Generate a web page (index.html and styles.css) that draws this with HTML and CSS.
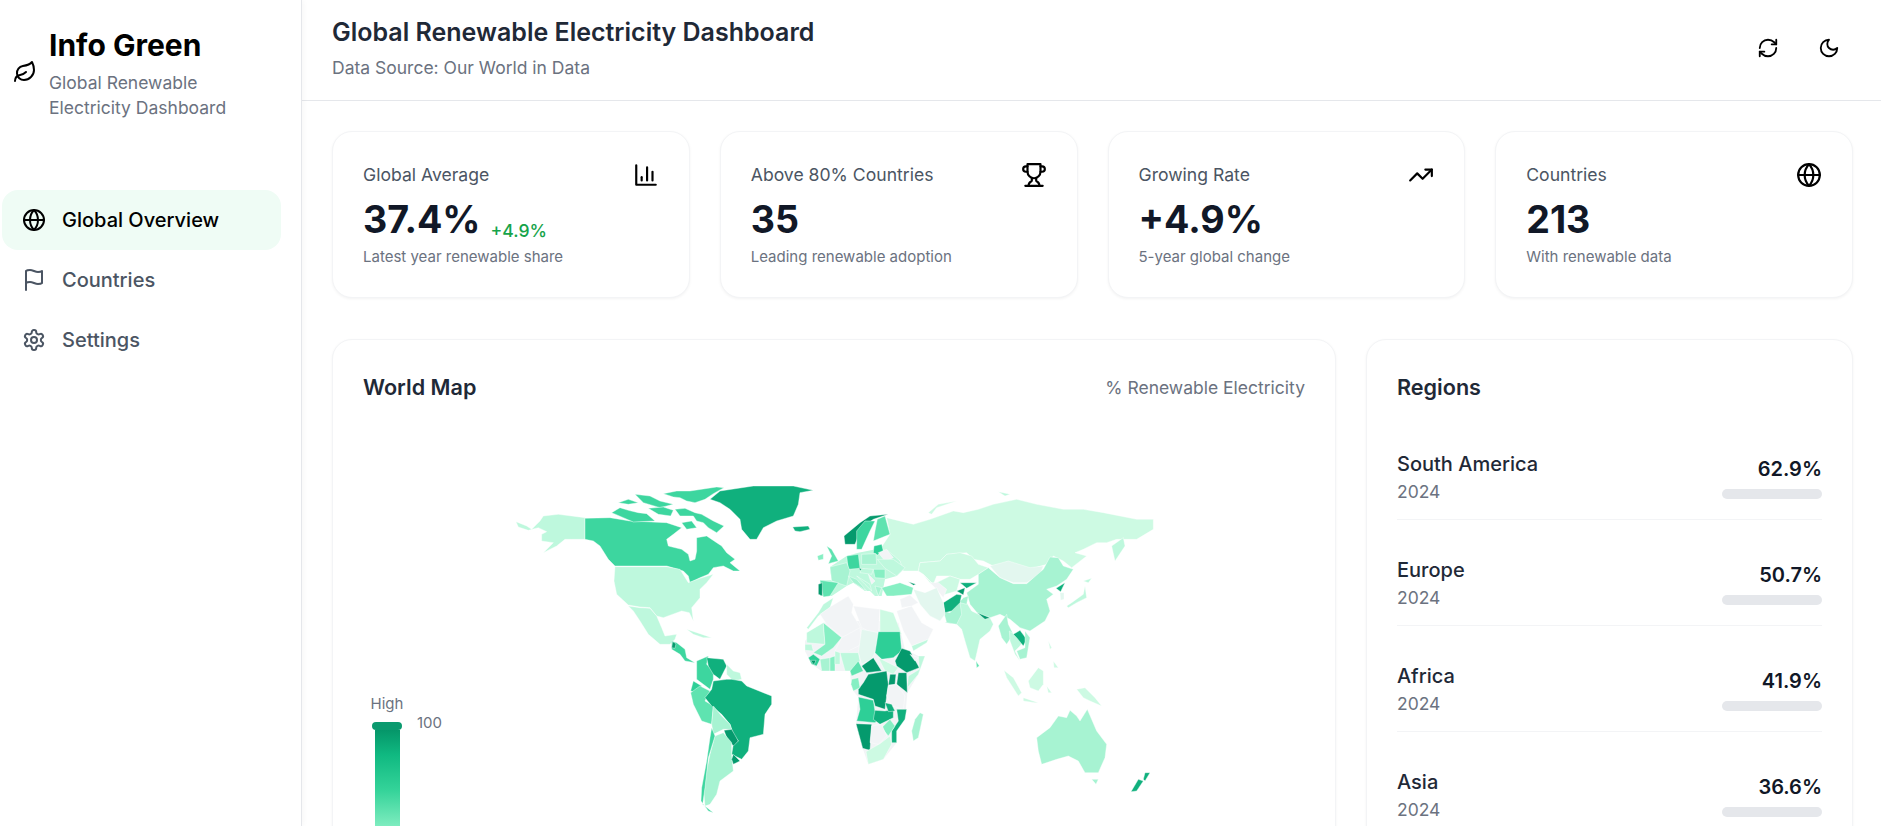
FILE: index.html
```html
<!DOCTYPE html>
<html lang="en">
<head>
<meta charset="utf-8">
<title>Info Green</title>
<link rel="stylesheet" href="styles.css">
</head>
<body>
<div class="app">
  <aside class="sidebar">
    <div class="brand">
      <svg class="icon brand-icon" viewBox="0 0 24 24"><path d="M11 20A7 7 0 0 1 9.8 6.1C15.5 5 17 4.48 19 2c1 2 2 4.18 2 8 0 5.5-4.78 10-10 10Z"/><path d="M2 21c0-3 1.85-5.36 5.08-6C9.5 14.52 12 13 13 12"/></svg>
      <div>
        <div class="brand-title">Info Green</div>
        <div class="brand-sub">Global Renewable Electricity Dashboard</div>
      </div>
    </div>
    <nav class="nav">
      <a class="nav-item active"><svg class="icon" viewBox="0 0 24 24"><circle cx="12" cy="12" r="10"/><path d="M12 2a14.5 14.5 0 0 0 0 20 14.5 14.5 0 0 0 0-20"/><path d="M2 12h20"/></svg>Global Overview</a>
      <a class="nav-item"><svg class="icon" viewBox="0 0 24 24"><path d="M4 15s1-1 4-1 5 2 8 2 4-1 4-1V3s-1 1-4 1-5-2-8-2-4 1-4 1z"/><path d="M4 22v-7"/></svg>Countries</a>
      <a class="nav-item"><svg class="icon" viewBox="0 0 24 24"><path d="M12.22 2h-.44a2 2 0 0 0-2 2v.18a2 2 0 0 1-1 1.73l-.43.25a2 2 0 0 1-2 0l-.15-.08a2 2 0 0 0-2.73.73l-.22.38a2 2 0 0 0 .73 2.73l.15.1a2 2 0 0 1 1 1.72v.51a2 2 0 0 1-1 1.74l-.15.09a2 2 0 0 0-.73 2.73l.22.38a2 2 0 0 0 2.73.73l.15-.08a2 2 0 0 1 2 0l.43.25a2 2 0 0 1 1 1.73V20a2 2 0 0 0 2 2h.44a2 2 0 0 0 2-2v-.18a2 2 0 0 1 1-1.73l.43-.25a2 2 0 0 1 2 0l.15.08a2 2 0 0 0 2.73-.73l.22-.39a2 2 0 0 0-.73-2.73l-.15-.08a2 2 0 0 1-1-1.74v-.5a2 2 0 0 1 1-1.74l.15-.09a2 2 0 0 0 .73-2.73l-.22-.38a2 2 0 0 0-2.73-.73l-.15.08a2 2 0 0 1-2 0l-.43-.25a2 2 0 0 1-1-1.73V4a2 2 0 0 0-2-2z"/><circle cx="12" cy="12" r="3"/></svg>Settings</a>
    </nav>
  </aside>
  <div class="main">
    <header class="topbar">
      <div>
        <h1 class="page-title">Global Renewable Electricity Dashboard</h1>
        <p class="page-sub">Data Source: Our World in Data</p>
      </div>
      <div class="top-actions">
        <svg class="icon" viewBox="0 0 24 24"><path d="M3 12a9 9 0 0 1 9-9 9.75 9.75 0 0 1 6.74 2.74L21 8"/><path d="M21 3v5h-5"/><path d="M21 12a9 9 0 0 1-9 9 9.75 9.75 0 0 1-6.74-2.74L3 16"/><path d="M8 16H3v5"/></svg>
        <svg class="icon" viewBox="0 0 24 24"><path d="M12 3a6 6 0 0 0 9 9 9 9 0 1 1-9-9Z"/></svg>
      </div>
    </header>
    <div class="content">
      <section class="stats">
        <div class="card stat">
          <div class="stat-head"><span>Global Average</span><svg class="icon" viewBox="0 0 24 24"><path d="M3 3v18h18"/><path d="M18 17V9"/><path d="M13 17V5"/><path d="M8 17v-3"/></svg></div>
          <div class="stat-value">37.4%<span class="stat-delta">+4.9%</span></div>
          <div class="stat-note">Latest year renewable share</div>
        </div>
        <div class="card stat">
          <div class="stat-head"><span>Above 80% Countries</span><svg class="icon" viewBox="0 0 24 24"><path d="M6 9H4.5a2.5 2.5 0 0 1 0-5H6"/><path d="M18 9h1.5a2.5 2.5 0 0 0 0-5H18"/><path d="M4 22h16"/><path d="M10 14.66V17c0 .55-.47.98-.97 1.21C7.85 18.75 7 20.24 7 22"/><path d="M14 14.66V17c0 .55.47.98.97 1.21C16.15 18.75 17 20.24 17 22"/><path d="M18 2H6v7a6 6 0 0 0 12 0V2Z"/></svg></div>
          <div class="stat-value">35</div>
          <div class="stat-note">Leading renewable adoption</div>
        </div>
        <div class="card stat">
          <div class="stat-head"><span>Growing Rate</span><svg class="icon" viewBox="0 0 24 24"><path d="m22 7-8.5 8.5-5-5L2 17"/><path d="M16 7h6v6"/></svg></div>
          <div class="stat-value">+4.9%</div>
          <div class="stat-note">5-year global change</div>
        </div>
        <div class="card stat">
          <div class="stat-head"><span>Countries</span><svg class="icon" viewBox="0 0 24 24"><circle cx="12" cy="12" r="10"/><path d="M12 2a14.5 14.5 0 0 0 0 20 14.5 14.5 0 0 0 0-20"/><path d="M2 12h20"/></svg></div>
          <div class="stat-value">213</div>
          <div class="stat-note">With renewable data</div>
        </div>
      </section>
      <section class="panels">
        <div class="card map-card">
          <div class="panel-head"><h2 class="panel-title">World Map</h2><span class="panel-hint">% Renewable Electricity</span></div>
          <div class="map-area">
            <div class="legend">
              <div class="legend-high">High</div>
              <div class="legend-scale">
                <div class="legend-track"><div class="legend-handle"></div><div class="legend-bar"></div></div>
                <div class="legend-num">100</div>
              </div>
            </div>
            <svg class="world" viewBox="500 470 700 356">
              <g transform="translate(790 480) scale(.33333)">
                <polygon class="m8 base" points="120,258 170,225 205,215 258,205 300,200 345,260 320,285 285,295 275,345 255,345 240,330 225,330 190,305 170,315 125,345 90,345 90,298 125,298"/>
              </g>
              <g transform="translate(790 620) scale(.33333)">
                <polygon class="g base" points="45,60 100,5 155,0 265,0 325,5 345,85 385,105 405,105 385,160 352,215 345,295 320,330 320,365 280,415 235,430 218,382 198,308 205,228 190,210 183,190 180,150 135,150 95,150 65,130 45,90"/>
              </g>
              <g transform="translate(500 470) scale(.33333)">
                <polygon class="m8" points="48,152 80,165 95,175 120,150 130,135 175,130 255,140 255,205 215,205 195,205 170,225 130,245 160,215 125,210 125,190 140,182 115,170 85,178 55,168"/>
                <polygon class="m4" points="255,142 330,140 390,150 500,155 545,170 520,190 500,205 505,225 545,235 565,250 570,270 585,265 590,240 590,200 620,195 650,215 665,225 680,245 705,265 690,275 720,300 700,300 670,285 640,290 625,310 600,320 570,335 565,315 550,300 500,285 345,285 325,265 300,225 280,210 255,205"/>
                <polygon class="m4" points="335,125 360,110 385,118 415,125 440,128 465,150 400,153 370,140"/>
                <polygon class="m4" points="355,95 385,85 415,95 385,100"/>
                <polygon class="m4" points="405,70 450,75 480,90 520,100 480,110 430,95"/>
                <polygon class="m4" points="490,68 530,60 570,60 650,48 672,50 640,68 615,85 585,95 560,90 540,80 520,78"/>
                <polygon class="m4" points="525,115 555,112 585,125 605,130 640,150 672,165 650,185 625,170 610,155 590,150 580,135 540,135"/>
                <polygon class="m4" points="445,112 490,108 520,118 512,135 475,130"/>
                <polygon class="m4" points="545,155 575,150 590,170 560,175"/>
                <polygon class="m2" points="630,85 660,60 760,45 880,45 940,58 900,65 895,100 880,135 830,150 790,170 770,205 750,205 725,175 720,145 690,115 660,95"/>
                <polygon class="m2" points="878,168 925,165 930,175 900,182 885,180"/>
                <polygon class="m8" points="345,287 500,287 540,295 565,335 600,322 640,310 620,335 600,355 600,380 575,410 580,450 568,425 545,420 490,440 470,435 450,410 420,408 385,402 350,370 342,330"/>
                <polygon class="m8" points="385,405 420,410 450,412 470,435 485,470 495,495 530,490 525,505 510,520 480,520 445,490 420,450 400,420"/>
                <polygon class="m4" points="515,510 530,515 555,535 560,560 585,575 555,570 540,550 515,535"/>
                <polygon class="m1" points="518,512 528,518 525,532 515,530"/>
                <polygon class="m8" points="560,475 600,488 635,500 610,500 580,490"/>
                <polygon class="m4" points="590,570 625,555 620,580 640,600 640,625 630,655 610,640 590,625 590,600"/>
                <polygon class="m2" points="620,560 670,565 680,585 660,625 640,610 625,585"/>
                <polygon class="m8" points="680,580 700,600 720,605 725,625 700,630 680,610"/>
                <polygon class="m3" points="580,630 605,645 590,665 572,660"/>
                <polygon class="m5" points="572,665 600,645 630,660 615,690 640,705 635,760 605,750 580,700"/>
                <polygon class="m2" points="615,680 635,655 640,630 680,625 695,625 725,630 740,645 815,675 815,700 795,730 790,790 750,800 745,840 725,865 695,850 700,820 715,810 700,790 690,760 665,730 635,705"/>
                <polygon class="m7" points="640,705 665,735 690,760 695,775 670,775 640,790 635,760"/>
                <polygon class="m1" points="672,778 695,775 715,810 700,825 680,800"/>
                <polygon class="m7" points="645,795 670,785 695,815 695,850 700,900 660,930 650,970 630,1000 615,1005 612,970 620,900 630,850"/>
                <polygon class="m4" points="635,770 645,795 625,860 615,950 608,1000 640,1025 625,1020 603,990 605,950 620,870 630,800"/>
                <polygon class="m1" points="700,850 720,870 700,880 695,865"/>
              </g>
              <g transform="translate(850 470) scale(.33333)">
                <polygon class="m9" points="110,140 170,155 190,160 240,145 310,120 340,125 385,115 430,100 500,85 560,100 640,115 700,115 760,125 860,145 910,145 910,175 860,205 800,205 770,215 740,215 700,235 675,245 710,255 665,290 640,270 610,255 590,280 540,295 500,285 430,285 400,270 370,265 350,245 290,250 270,270 210,275 205,300 160,300 150,270 115,240 90,235 120,190"/>
                <polygon class="m9" points="235,125 265,100 320,90 260,110 245,130"/>
                <polygon class="m8" points="445,62 480,70 465,75"/>
                <polygon class="m9" points="210,275 270,270 290,250 330,245 365,255 385,280 415,290 385,310 360,325 330,325 300,315 260,315 250,340 220,310 205,300"/>
                <polygon class="m9" points="220,312 250,340 300,315 330,325 320,360 280,372 260,350 240,335"/>
                <polygon class="m10" points="420,285 475,270 540,290 580,285 570,310 530,335 490,335 450,320"/>
                <polygon class="m7" points="385,310 415,290 450,320 490,338 530,338 580,295 600,258 625,260 640,285 670,295 650,325 620,345 590,355 610,370 590,385 600,420 585,450 540,480 510,470 480,445 450,430 420,440 385,430 360,400 350,365 385,340"/>
                <polygon class="m2" points="618,352 645,335 632,362"/>
                <polygon class="m10" points="630,365 642,365 642,385 632,388"/>
                <polygon class="m8" points="650,405 665,395 700,370 705,345 710,380 680,395 655,410"/>
                <polygon class="m8" points="700,330 725,322 715,335"/>
                <polygon class="m8" points="785,225 820,200 825,225 795,270"/>
                <polygon class="m8" points="330,395 350,395 365,420 385,430 420,440 430,460 420,480 390,505 375,570 360,560 345,510 335,475 320,460 285,455 310,435"/>
                <polygon class="m7" points="280,420 300,425 340,380 355,375 350,400 330,395 335,430 320,460 290,455"/>
                <polygon class="m2" points="280,395 320,370 335,372 330,395 305,420 285,425"/>
                <polygon class="g" points="240,335 265,335 290,355 280,380 255,350"/>
                <polygon class="m10" points="190,355 225,365 260,350 280,395 285,430 270,450 240,435 210,400"/>
                <polygon class="g" points="140,420 185,405 215,455 250,475 235,505 185,525 160,480"/>
                <polygon class="g" points="150,385 180,372 205,395 185,405 155,410"/>
                <polygon class="m8" points="185,525 235,505 230,515 190,540"/>
                <polygon class="m6" points="95,350 150,335 190,350 185,370 130,375 110,375"/>
                <polygon class="m2" points="330,335 380,335 350,352"/>
                <polygon class="m1" points="320,360 345,350 340,372"/>
                <polygon class="m1" points="382,425 420,440 405,445"/>
                <polygon class="m1" points="175,332 198,340 190,343"/>
                <polygon class="m7" points="445,465 470,430 475,460 490,490 470,520 455,500"/>
                <polygon class="m8" points="478,480 520,510 510,525 495,540 510,570 495,550 480,510"/>
                <polygon class="m2" points="490,490 510,478 530,505 520,525 500,500"/>
                <polygon class="m7" points="525,480 540,500 530,560 510,565 500,540 525,530"/>
                <polygon class="m5" points="378,570 388,585 380,590"/>
                <polygon class="m9" points="462,598 490,620 515,665 505,675 470,620"/>
                <polygon class="m9" points="535,630 565,590 580,600 580,640 565,660 540,650"/>
                <polygon class="m9" points="520,680 565,695 555,695 520,690"/>
                <polygon class="m9" points="590,645 605,665 595,665"/>
                <polygon class="m9" points="680,655 705,650 735,680 755,705 720,690 700,680"/>
                <polygon class="m9" points="595,510 605,530 600,535"/>
                <polygon class="m9" points="610,570 625,590 612,590"/>
                <polygon class="m7" points="560,800 600,770 625,735 650,740 660,718 680,735 690,750 712,715 740,780 770,820 765,860 745,905 705,905 685,870 655,855 620,865 575,880 565,840"/>
                <polygon class="m7" points="725,925 745,925 738,940"/>
                <polygon class="m2" points="885,905 900,905 885,930 880,925"/>
                <polygon class="m2" points="865,925 880,930 860,960 843,962"/>
                <polygon class="m7" points="210,725 220,730 205,800 190,810 185,780 195,745"/>
              </g>
              <g transform="translate(790 480) scale(.33333)">
                <polygon class="m8" points="100,370 130,350 120,380 85,405 55,445 50,440 85,395"/>
                <polygon class="g" points="90,400 125,375 175,345 190,370 185,395 215,445 160,470 110,430"/>
                <polygon class="g" points="190,375 270,385 265,465 215,440"/>
                <polygon class="m9" points="270,385 310,395 335,460 270,460"/>
                <polygon class="m1" points="162,165 210,125 240,105 295,100 250,115 215,140 195,190 165,190"/>
                <polygon class="m4" points="200,150 225,120 255,120 240,150 215,205 200,205"/>
                <polygon class="m5" points="262,115 285,105 300,160 250,180 255,150"/>
                <polygon class="m3" points="252,195 275,190 280,210 262,222 250,215"/>
                <polygon class="g" points="265,215 290,205 310,230 285,240"/>
                <polygon class="m7" points="215,220 258,218 260,250 215,250"/>
                <polygon class="m4" points="170,225 205,220 210,262 175,265"/>
                <polygon class="m5" points="110,195 125,205 145,240 115,248 125,225"/>
                <polygon class="m6" points="82,225 100,218 100,235 85,238"/>
                <polygon class="m7" points="120,258 170,245 180,270 170,315 125,300"/>
                <polygon class="m5" points="90,298 145,305 120,345 100,348 95,320"/>
                <polygon class="m1" points="85,310 97,305 97,345 85,340"/>
                <polygon class="m7" points="175,285 200,295 230,330 215,320 190,305"/>
                <polygon class="m1" points="205,262 225,265 215,272"/>
                <polygon class="m6" points="250,265 285,265 285,292 255,290"/>
                <polygon class="m8" points="262,235 310,235 345,260 320,285 285,262"/>
                <polygon class="m8" points="200,285 240,310 245,330 225,310"/>
                <polygon class="g" points="235,280 255,300 245,310"/>
                <polygon class="m7" points="255,315 275,320 265,345"/>
                <polygon class="m8" points="215,262 250,265 245,280 210,275"/>
              </g>
              <g transform="translate(790 620) scale(.33333)">
                <polygon class="m8" points="50,35 75,20 100,5 105,70 50,65"/>
                <polygon class="m6" points="100,5 155,50 130,80 95,105 70,95 105,70"/>
                <polygon class="m8" points="45,70 65,70 70,90 45,88"/>
                <polygon class="g" points="155,50 210,20 215,70 175,90 135,90"/>
                <polygon class="m10" points="215,25 265,35 255,95 245,115 215,130 205,95"/>
                <polygon class="m8" points="150,95 205,95 210,120 185,150 165,150"/>
                <polygon class="m3" points="265,32 330,32 335,90 310,110 275,115 255,95"/>
                <polygon class="m3" points="55,110 70,100 90,115 80,135 65,130"/>
                <polygon class="m1" points="62,118 78,118 72,132"/>
                <polygon class="m7" points="90,115 120,110 120,150 95,150"/>
                <polygon class="m6" points="120,110 135,105 135,150 120,150"/>
                <polygon class="m8" points="135,90 150,95 150,130 135,130"/>
                <polygon class="m5" points="205,120 220,150 185,165 180,150"/>
                <polygon class="m1" points="215,135 250,110 275,150 230,155"/>
                <polygon class="m9" points="265,110 325,140 310,160 285,150"/>
                <polygon class="m1" points="335,82 360,90 388,140 350,155 320,135 315,120"/>
                <polygon class="m8" points="385,105 405,105 385,160 352,200 355,165 388,145"/>
                <polygon class="g" points="360,100 385,110 375,120"/>
                <polygon class="m1" points="325,155 350,155 352,215 320,190"/>
                <polygon class="m1" points="300,160 318,160 315,190 295,192"/>
                <polygon class="m1" points="235,160 290,150 295,190 290,225 285,265 255,255 250,235 205,220 205,205 220,185"/>
                <polygon class="m6" points="185,175 205,170 210,200 190,210 183,190"/>
                <polygon class="g" points="295,195 320,190 345,225 340,265 305,255 290,225"/>
                <polygon class="m3" points="205,228 250,238 255,270 285,275 255,305 200,300 210,265"/>
                <polygon class="m2" points="255,268 285,270 310,265 310,290 270,310 250,295"/>
                <polygon class="m2" points="320,265 350,265 345,295 320,330 320,365 305,365 305,330 325,300"/>
                <polygon class="m2" points="285,245 305,250 315,270 295,272"/>
                <polygon class="m6" points="275,320 300,295 315,315 295,345"/>
                <polygon class="m1" points="198,308 245,310 240,388 218,382"/>
                <polygon class="g" points="245,315 275,310 290,345 265,370 240,365"/>
                <polygon class="m9" points="228,392 240,385 270,368 300,345 305,370 280,415 235,430"/>
              </g>
            </svg>
          </div>
        </div>
        <div class="card regions">
          <h2 class="panel-title">Regions</h2>
          <div class="region-list">
            <div class="region"><div><div class="region-name">South America</div><div class="region-year">2024</div></div><div class="region-stat"><div class="region-pct">62.9%</div><div class="region-bar"></div></div></div>
            <div class="region"><div><div class="region-name">Europe</div><div class="region-year">2024</div></div><div class="region-stat"><div class="region-pct">50.7%</div><div class="region-bar"></div></div></div>
            <div class="region"><div><div class="region-name">Africa</div><div class="region-year">2024</div></div><div class="region-stat"><div class="region-pct">41.9%</div><div class="region-bar"></div></div></div>
            <div class="region"><div><div class="region-name">Asia</div><div class="region-year">2024</div></div><div class="region-stat"><div class="region-pct">36.6%</div><div class="region-bar"></div></div></div>
          </div>
        </div>
      </section>
    </div>
  </div>
</div>
</body>
</html>
```
FILE: styles.css
```css
* { box-sizing: border-box; }
html, body { margin: 0; height: 100%; overflow: hidden; }
body { font-family: Inter, "Liberation Sans", sans-serif; background: #fff; color: #111827; }
h1, h2, p { margin: 0; }
.icon { width: 24px; height: 24px; fill: none; stroke: currentColor; stroke-width: 2; stroke-linecap: round; stroke-linejoin: round; flex: none; display: block; }
.app { display: flex; height: 826px; }
.sidebar { width: 302px; flex: none; border-right: 1px solid #e5e7eb; box-shadow: 1px 0 6px rgba(0,0,0,.04); padding: 24px 20px 0 2px; position: relative; z-index: 1; background: #fff; }
.brand { display: flex; align-items: center; gap: 12px; padding-left: 11px; height: 96px; margin-bottom: 70px; color: #000; }
.brand-title { font-size: 30px; line-height: 42px; font-weight: 700; color: #000; }
.brand-sub { font-size: 17.5px; line-height: 25px; color: #6b7280; margin-top: 4px; width: 200px; }
.nav { display: flex; flex-direction: column; }
.nav-item { display: flex; align-items: center; gap: 16px; height: 60px; padding-left: 20px; border-radius: 16px; font-size: 20px; font-weight: 500; color: #4b5563; }
.nav-item.active { background: #effcf5; color: #000; }
.main { flex: 1; min-width: 0; display: flex; flex-direction: column; }
.topbar { height: 101px; flex: none; border-bottom: 1px solid #e5e7eb; display: flex; justify-content: space-between; padding: 16px 41px 0 30px; }
.page-title { font-size: 25px; line-height: 32px; font-weight: 600; color: #1f2937; }
.page-sub { font-size: 17.5px; line-height: 24px; color: #6b7280; margin-top: 8px; }
.top-actions { display: flex; gap: 39px; padding-top: 21px; color: #000; }
.top-actions .icon { width: 22px; height: 22px; }
.content { padding: 30px 28px 0 30px; }
.card { background: #fff; border: 1px solid #f3f4f6; border-radius: 20px; box-shadow: 0 1px 3px rgba(0,0,0,.05); }
.stats { display: grid; grid-template-columns: repeat(4, 1fr); gap: 30px; }
.stat { height: 167px; padding: 29px 30px; }
.stat-head { display: flex; justify-content: space-between; align-items: center; height: 27px; font-size: 17.6px; color: #4b5563; }
.stat-head .icon { color: #000; width: 26px; height: 26px; }
.stat-value { font-size: 37.6px; line-height: 46px; font-weight: 700; color: #111827; margin-top: 9px; display: flex; align-items: flex-end; }
.stat-delta { font-size: 17.6px; line-height: 24px; font-weight: 500; color: #16a34a; margin-left: 10px; }
.stat-note { font-size: 15px; line-height: 22px; color: #6b7280; margin-top: 3px; }
.panels { display: grid; grid-template-columns: 1004px 1fr; gap: 30px; margin-top: 41px; }
.map-card { height: 620px; padding: 30px; }
.panel-head { display: flex; justify-content: space-between; align-items: center; height: 34px; }
.panel-title { font-size: 21.6px; line-height: 34px; font-weight: 600; color: #1f2937; }
.panel-hint { font-size: 17.5px; color: #6b7280; }
.map-area { position: relative; padding-top: 67px; }
.world { display: block; width: 700px; height: 356px; margin-left: 137px; }
.world polygon { stroke: rgba(255,255,255,.8); stroke-width: .5px; stroke-linejoin: round; vector-effect: non-scaling-stroke; }
.world polygon.base { stroke: none; }
.m1 { fill: #059a6d; } .m2 { fill: #10b07d; } .m3 { fill: #2ecf97; } .m4 { fill: #3dd69f; }
.m5 { fill: #5fe3b0; } .m6 { fill: #86efc3; } .m7 { fill: #a7f3d2; } .m8 { fill: #bef8dd; }
.m9 { fill: #cdfae3; } .m10 { fill: #e3f7ef; } .g { fill: #f2f4f6; }
.legend { position: absolute; left: 9px; top: 290px; font-size: 15px; color: #6b7280; }
.legend-high { width: 34px; margin-left: -2px; text-align: center; line-height: 20px; }
.legend-scale { display: flex; gap: 15px; margin-top: 8px; }
.legend-track { width: 30px; display: flex; flex-direction: column; align-items: center; }
.legend-handle { width: 30px; height: 8px; border-radius: 4px; background: #0b9a6f; flex: none; }
.legend-bar { width: 25px; height: 100px; flex: none; background: linear-gradient(#059669, #10b981 25%, #34d399 60%, #86efc3 100%); }
.legend-num { line-height: 16px; margin-top: -7px; }
.regions { height: 620px; padding: 30px; }
.region-list { margin-top: 10px; }
.region { height: 106px; border-bottom: 1px solid #f3f4f6; padding-top: 36px; display: flex; justify-content: space-between; }
.region-name { font-size: 20px; line-height: 28px; font-weight: 500; color: #1f2937; }
.region-year { font-size: 17.5px; line-height: 24px; color: #6b7280; margin-top: 2px; }
.region-stat { width: 100px; display: flex; flex-direction: column; align-items: flex-end; padding-top: 6px; }
.region-pct { font-size: 20px; line-height: 26px; font-weight: 600; color: #111827; }
.region-bar { width: 100px; height: 10px; border-radius: 5px; background: #e5e7eb; margin-top: 7px; }
```
